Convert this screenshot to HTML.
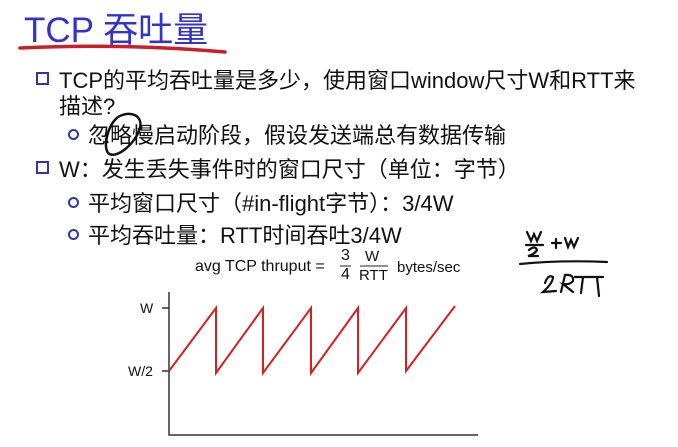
<!DOCTYPE html>
<html><head><meta charset="utf-8"><style>
body{margin:0;width:678px;height:447px;background:#fff;position:relative;overflow:hidden;font-family:"Liberation Sans","Noto Sans CJK SC",sans-serif;color:#111}
.t{position:absolute;white-space:nowrap}
.title{left:24px;top:2px;font-size:35px;color:#3333cc}
.l{font-size:22px}
.bul{position:absolute;width:9px;height:9px;border:2px solid #3333aa}
.cir{position:absolute;width:7px;height:7px;border:2px solid #3333aa;border-radius:50%}
.f{font-size:14px}
</style></head><body>
<div class="t title">TCP 吞吐量</div>
<svg width="678" height="447" style="position:absolute;left:0;top:0">
<path d="M20 48 Q120 43 225 52" stroke="#c8202a" stroke-width="3.5" fill="none" stroke-linecap="round"/>
<path d="M118 117 C108 125 103 145 108 153 C115 160 135 145 140 128 C143 115 130 110 118 117" stroke="#111" stroke-width="2.5" fill="none"/>
<g stroke="#333" stroke-width="1.5" fill="none">
<path d="M169 292 V435 H478"/>
<path d="M162 308 H169 M162 371 H169"/>
</g>
<path d="M169 371 L216 308 L216 373 L263 308 L263 373 L311 308 L311 373 L358 308 L358 373 L406 308 L406 371 L455 306" stroke="#d42020" stroke-width="2" fill="none"/>
<line x1="340" y1="266" x2="351" y2="266" stroke="#222" stroke-width="1"/>
<line x1="360" y1="266" x2="388" y2="266" stroke="#222" stroke-width="1"/>
<g stroke="#111" stroke-width="2.2" fill="none" stroke-linecap="round">
<path d="M527 232 L531 241 L534 234 L537 241 L541 232"/>
<path d="M526 245 H543"/>
<path d="M529 250 Q535 245 537 250 Q535 254 528 256 L538 256"/>
<path d="M552 243 H561 M556 239 V248"/>
<path d="M565 238 L568 247 L571 240 L574 247 L578 238"/>
<path d="M520 264 Q560 260 607 262"/>
<path d="M545 283 Q548 274 553 277 Q553 283 543 292 L556 291"/>
<path d="M561 292 L565 275 Q574 274 573 281 Q570 285 563 284 L573 292"/>
<path d="M575 277 H590 M583 277 L581 293"/>
<path d="M590 277 H603 M597 277 L599 296"/>
</g>
</svg>
<div class="bul" style="left:36px;top:72px"></div>
<div class="t l" style="left:59px;top:63px">TCP的平均吞吐量是多少，使用窗口window尺寸W和RTT来</div>
<div class="t l" style="left:59px;top:89px">描述?</div>
<div class="cir" style="left:68px;top:129px"></div>
<div class="t l" style="left:88px;top:118px">忽略慢启动阶段，假设发送端总有数据传输</div>
<div class="bul" style="left:36px;top:161px"></div>
<div class="t l" style="left:59px;top:152px">W：发生丢失事件时的窗口尺寸（单位：字节）</div>
<div class="cir" style="left:68px;top:197px"></div>
<div class="t l" style="left:88px;top:186px">平均窗口尺寸（#in-flight字节）：3/4W</div>
<div class="cir" style="left:68px;top:229px"></div>
<div class="t l" style="left:88px;top:218px">平均吞吐量：RTT时间吞吐3/4W</div>
<div class="t" style="left:195px;top:258px;font-size:16px">avg TCP thruput =</div>
<div class="t" style="left:341px;top:247px;font-size:16px">3</div>
<div class="t" style="left:341px;top:266px;font-size:16px">4</div>
<div class="t" style="left:365px;top:248px;font-size:15px">W</div>
<div class="t" style="left:359px;top:267px;font-size:15px">RTT</div>
<div class="t" style="left:397px;top:259px;font-size:15px">bytes/sec</div>
<div class="t f" style="left:140px;top:300px">W</div>
<div class="t f" style="left:128px;top:363px">W/2</div>
</body></html>
